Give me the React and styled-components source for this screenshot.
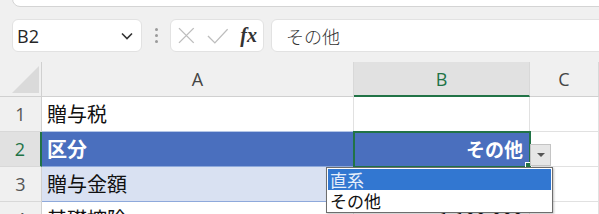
import React from "react";
import styled, { createGlobalStyle } from "styled-components";

const GlobalStyle = createGlobalStyle`
  html, body { margin: 0; padding: 0; }
  body { background: #f0f0f0; font-family: "Noto Sans CJK JP", "Noto Sans", sans-serif; }
`;

const Page = styled.div`
  width: 599px;
  height: 214px;
  overflow: hidden;
  background: #f0f0f0;
  display: flex;
  flex-direction: column;
`;

const TopStrip = styled.div`
  height: 19px;
  padding-left: 12px;
  overflow: hidden;
  flex: none;
`;

const Ribbon = styled.div`
  margin-top: -12px;
  height: 17px;
  background: #fff;
  border: 1px solid #d4d4d4;
  border-radius: 8px;
  margin-right: -20px;
`;

const FormulaRow = styled.div`
  height: 33px;
  display: flex;
  align-items: stretch;
  padding-left: 12px;
  flex: none;
`;

const Box = styled.div`
  box-sizing: border-box;
  background: #fff;
  border: 1px solid #e2e2e2;
  border-radius: 6px;
  display: flex;
  align-items: center;
`;

const NameBox = styled(Box)`
  width: 130px;
  padding: 0 8px 0 4px;
  justify-content: space-between;
  font-family: "Open Sans", "Liberation Sans", sans-serif;
  font-size: 18px;
  color: #262626;
`;

const Handle = styled.div`
  width: 28px;
  display: flex;
  flex-direction: column;
  align-items: center;
  justify-content: center;
  gap: 3px;
`;

const Dot = styled.span`
  width: 3px;
  height: 3px;
  border-radius: 50%;
  background: #9a9a9a;
`;

const FxBox = styled(Box)`
  width: 94px;
  padding: 0 6px 0 7px;
  gap: 12px;
`;

const FxLabel = styled.span`
  font-family: "Liberation Serif", "DejaVu Serif", serif;
  font-style: italic;
  font-weight: bold;
  font-size: 20px;
  color: #333;
`;

const FormulaInput = styled(Box)`
  flex: 1;
  margin-left: 7px;
  margin-right: -20px;
  padding-left: 14px;
  font-size: 18px;
  font-weight: 300;
  color: #333;
`;

const Sheet = styled.div`
  margin-top: 10px;
  display: grid;
  grid-template-columns: 42px 312px 176px 1fr;
  grid-template-rows: 35px repeat(4, 35px);
`;

const Corner = styled.div`
  box-sizing: border-box;
  border-bottom: 1px solid #d0d0d0;
  border-right: 1px solid #d0d0d0;
  display: flex;
  align-items: flex-end;
  padding: 0 2px 3px 12px;
`;

const CornerTriangle = styled.div`
  width: 27px;
  height: 27px;
  background: #dadada;
  clip-path: polygon(100% 0, 100% 100%, 0 100%);
`;

const ColHead = styled.div`
  box-sizing: border-box;
  display: flex;
  align-items: center;
  justify-content: center;
  font-family: "Open Sans", "Liberation Sans", sans-serif;
  font-size: 18px;
  color: ${(p) => (p.$active ? "#217346" : "#444")};
  background: ${(p) => (p.$active ? "#e1e1e1" : "#f0f0f0")};
  border-right: 1px solid #d8d8d8;
  border-bottom: ${(p) => (p.$active ? "2px solid #217346" : "1px solid #d0d0d0")};
  padding-top: ${(p) => (p.$active ? "1px" : "0")};
`;

const RowHead = styled.div`
  box-sizing: border-box;
  display: flex;
  align-items: center;
  justify-content: center;
  font-family: "Open Sans", "Liberation Sans", sans-serif;
  font-size: 18px;
  color: ${(p) => (p.$active ? "#217346" : "#555")};
  background: ${(p) => (p.$active ? "#e1e1e1" : "#f0f0f0")};
  border-bottom: 1px solid #d8d8d8;
  border-right: ${(p) => (p.$active ? "2px solid #217346" : "1px solid #d0d0d0")};
`;

const fills = {
  plain: "#fff",
  head: "#4a6fbe",
  band: "#d9e1f2",
};

const Cell = styled.div`
  position: relative;
  box-sizing: border-box;
  display: flex;
  align-items: center;
  justify-content: ${(p) => (p.$right ? "flex-end" : "flex-start")};
  padding: 0 6px 1px 5px;
  font-size: ${(p) => (p.$right ? "19px" : "20px")};
  white-space: nowrap;
  color: ${(p) => (p.$kind === "head" ? "#fff" : "#111")};
  font-weight: ${(p) => (p.$kind === "head" ? 700 : 400)};
  background: ${(p) => fills[p.$kind || "plain"]};
  border-right: 1px solid ${(p) => (p.$kind && p.$kind !== "plain" ? "transparent" : "#e1e1e1")};
  border-bottom: 1px solid ${(p) => (p.$kind && p.$kind !== "plain" ? "#8ea9db" : p.$above ? "#b4c6e7" : "#e1e1e1")};
  ${(p) => p.$selected && `
    z-index: 5;
    outline: 2px solid #217346;
    outline-offset: -1px;
    padding-right: 6px;
  `}
`;

const FillHandle = styled.span`
  position: absolute;
  right: -3px;
  bottom: -3px;
  width: 5px;
  height: 5px;
  background: #217346;
  border: 1px solid #fff;
`;

const DropButton = styled.div`
  position: absolute;
  left: calc(100% + 1px);
  top: 12px;
  width: 21px;
  height: 22px;
  box-sizing: border-box;
  background: #e6e6e6;
  border: 1px solid #c4c4c4;
  display: flex;
  align-items: center;
  justify-content: center;
`;

const Arrow = styled.span`
  width: 0;
  height: 0;
  border-left: 4px solid transparent;
  border-right: 4px solid transparent;
  border-top: 4px solid #555;
`;

const List = styled.ul`
  position: absolute;
  left: -28px;
  top: calc(100% + 1px);
  width: 227px;
  margin: 0;
  padding: 1px;
  list-style: none;
  box-sizing: border-box;
  background: #fff;
  border: 1px solid #6d6d6d;
  box-shadow: 1px 1px 2px rgba(0, 0, 0, 0.25);
  font-family: "Noto Sans CJK JP", sans-serif;
  font-size: 17px;
  font-weight: 400;
  text-align: left;
`;

const Option = styled.li`
  height: 21px;
  line-height: 21px;
  padding-left: 2px;
  color: ${(p) => (p.$hot ? "#e6eefa" : "#111")};
  background: ${(p) => (p.$hot ? "#3277d1" : "#fff")};
`;

const rows = [
  { n: 1, a: "贈与税", b: "", kind: "plain", above: true },
  { n: 2, a: "区分", b: "その他", kind: "head", active: true },
  { n: 3, a: "贈与金額", b: "", kind: "band" },
  { n: 4, a: "基礎控除", b: "1,100,000", kind: "plain" },
];

export default function App() {
  return (
    <Page>
      <GlobalStyle />
      <TopStrip>
        <Ribbon />
      </TopStrip>
      <FormulaRow>
        <NameBox>
          <span>B2</span>
          <svg width="12" height="8" viewBox="0 0 12 8">
            <path d="M1 1.5 L6 6.5 L11 1.5" fill="none" stroke="#333" strokeWidth="1.6" />
          </svg>
        </NameBox>
        <Handle>
          <Dot />
          <Dot />
          <Dot />
        </Handle>
        <FxBox>
          <svg width="17" height="17" viewBox="0 0 17 17">
            <path d="M1 1 L16 16 M16 1 L1 16" stroke="#bdbdbd" strokeWidth="1.4" fill="none" />
          </svg>
          <svg width="22" height="16" viewBox="0 0 22 16">
            <path d="M1 8 L8 15 L21 1" stroke="#bdbdbd" strokeWidth="1.4" fill="none" />
          </svg>
          <FxLabel>fx</FxLabel>
        </FxBox>
        <FormulaInput>その他</FormulaInput>
      </FormulaRow>
      <Sheet>
        <Corner>
          <CornerTriangle />
        </Corner>
        <ColHead>A</ColHead>
        <ColHead $active>B</ColHead>
        <ColHead>C</ColHead>
        {rows.map((r) => (
          <React.Fragment key={r.n}>
            <RowHead $active={r.active}>{r.n}</RowHead>
            <Cell $kind={r.kind} $above={r.above}>{r.a}</Cell>
            <Cell $kind={r.kind} $right $selected={r.active}>
              {r.b}
              {r.active && (
                <>
                  <FillHandle />
                  <DropButton>
                    <Arrow />
                  </DropButton>
                  <List>
                    <Option $hot>直系</Option>
                    <Option>その他</Option>
                  </List>
                </>
              )}
            </Cell>
            <Cell />
          </React.Fragment>
        ))}
      </Sheet>
    </Page>
  );
}
